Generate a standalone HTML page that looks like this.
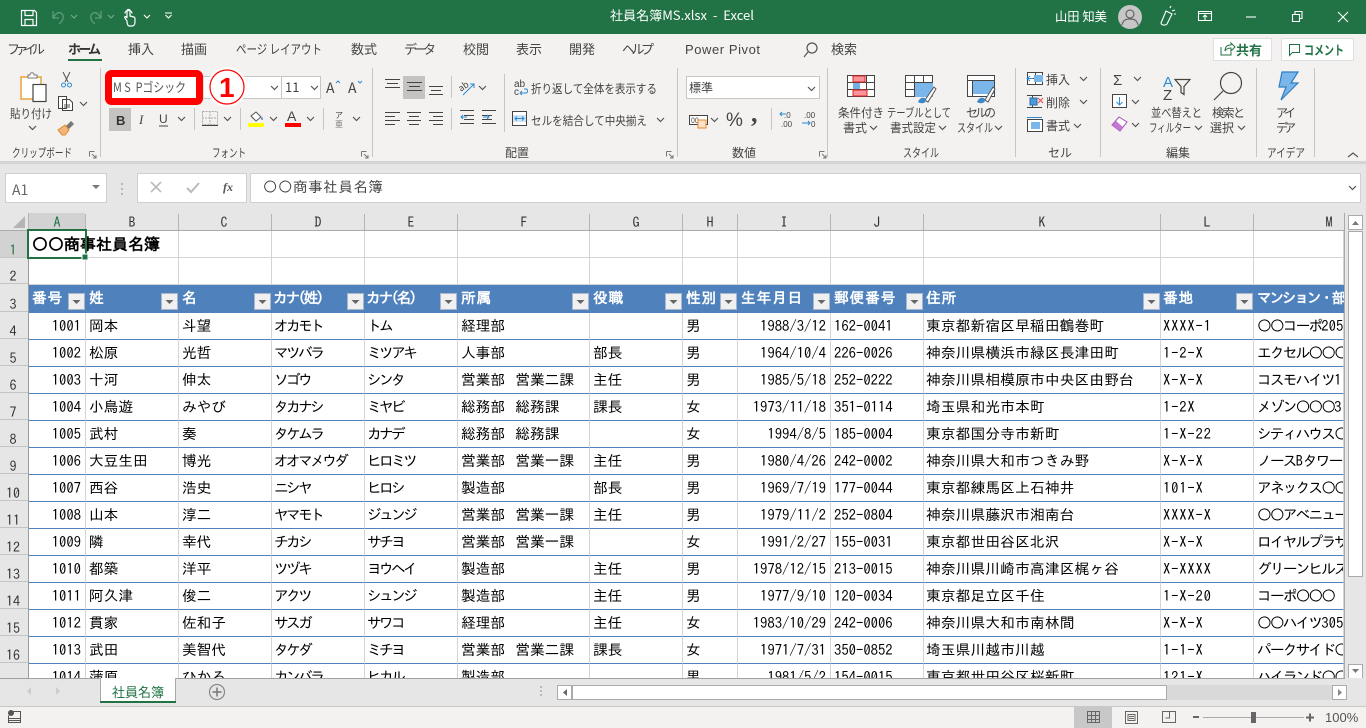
<!DOCTYPE html>
<html lang="ja"><head><meta charset="utf-8"><title>社員名簿MS.xlsx - Excel</title>
<style>
html,body{margin:0;padding:0;width:1366px;height:728px;overflow:hidden;background:#e6e6e6}
#grid{position:absolute;left:29px;top:231px;width:1315px;height:447px;overflow:hidden;background:#fff}
table{border-collapse:separate;border-spacing:0;table-layout:fixed;width:1315px;font:14.67px/1 "IPAGothic","Noto Sans CJK JP",monospace;color:#000}
td{padding:0 0 0 3px;border-right:1px solid #d4d4d4;border-bottom:1px solid #4f81bd;white-space:nowrap;overflow:hidden;box-sizing:border-box;height:27px;vertical-align:middle}
tr.p td{border-bottom-color:#d4d4d4}
tr.h td{background:#4f81bd;color:#fff;font-weight:bold;border:0;height:28px;padding-bottom:1px;overflow:hidden;letter-spacing:.9px}
td.n{text-align:right;padding:0 4px 0 0}
td.k{letter-spacing:-2.6px;padding-left:2px}
td.m{letter-spacing:-1.8px}
td .d{letter-spacing:0}
td:nth-child(6){word-spacing:3px}
td:nth-child(11){padding-left:2px;letter-spacing:.2px}
td:nth-child(12){padding-left:2px;letter-spacing:.8px}
tr.h td.k{letter-spacing:-2px;padding-left:1px}
tr.h td.m{letter-spacing:-2.2px}
#ov{position:absolute;left:0;top:0}
#ov text{font-family:"Noto Sans CJK JP","Liberation Sans",sans-serif;font-size:12px;fill:#444}
#ov .g{font-family:"IPAGothic",monospace;font-size:14px;fill:#333}
#ov .w{fill:#fff}
#ov .tb{font-size:13px}
</style></head><body>
<div id="grid"><table>
<colgroup><col style="width:57px"><col style="width:93px"><col style="width:93px"><col style="width:93px"><col style="width:93px"><col style="width:132px"><col style="width:93px"><col style="width:55px"><col style="width:93px"><col style="width:93px"><col style="width:237px"><col style="width:93px"><col style="width:90px"></colgroup>
<tr class="p"><td style="overflow:visible;font-weight:bold;font-size:16px;padding-top:1px;padding-bottom:1px">〇〇商事社員名簿</td><td></td><td></td><td></td><td></td><td></td><td></td><td></td><td></td><td></td><td></td><td></td><td></td></tr>
<tr class="p"><td style="height:26px"></td><td></td><td></td><td></td><td></td><td></td><td></td><td></td><td></td><td></td><td></td><td></td><td></td></tr>
<tr class="h"><td>番号</td><td>姓</td><td>名</td><td class="k">カナ(姓)</td><td class="k">カナ(名)</td><td>所属</td><td>役職</td><td>性別</td><td>生年月日</td><td>郵便番号</td><td>住所</td><td>番地</td><td class="m">マンション・部屋</td></tr>
<tr><td class="n">1001</td><td>岡本</td><td>斗望</td><td class="k">オカモト</td><td class="k">トム</td><td>経理部</td><td></td><td>男</td><td class="n">1988/3/12</td><td>162-0041</td><td>東京都新宿区早稲田鶴巻町</td><td>XXXX-1</td><td class="m">〇〇コーポ<span class="d">205</span></td></tr>
<tr><td class="n">1002</td><td>松原</td><td>光哲</td><td class="k">マツバラ</td><td class="k">ミツアキ</td><td>人事部</td><td>部長</td><td>男</td><td class="n">1964/10/4</td><td>226-0026</td><td>神奈川県横浜市緑区長津田町</td><td>1-2-X</td><td class="m">エクセル〇〇〇</td></tr>
<tr><td class="n">1003</td><td>十河</td><td>伸太</td><td class="k">ソゴウ</td><td class="k">シンタ</td><td>営業部 営業二課</td><td>主任</td><td>男</td><td class="n">1985/5/18</td><td>252-0222</td><td>神奈川県相模原市中央区由野台</td><td>X-X-X</td><td class="m">コスモハイツ<span class="d">1</span></td></tr>
<tr><td class="n">1004</td><td>小鳥遊</td><td>みやび</td><td class="k">タカナシ</td><td class="k">ミヤビ</td><td>総務部 総務課</td><td>課長</td><td>女</td><td class="n">1973/11/18</td><td>351-0114</td><td>埼玉県和光市本町</td><td>1-2X</td><td class="m">メゾン〇〇〇<span class="d">3</span></td></tr>
<tr><td class="n">1005</td><td>武村</td><td>奏</td><td class="k">タケムラ</td><td class="k">カナデ</td><td>総務部 総務課</td><td></td><td>女</td><td class="n">1994/8/5</td><td>185-0004</td><td>東京都国分寺市新町</td><td>1-X-22</td><td class="m">シティハウス〇</td></tr>
<tr><td class="n">1006</td><td>大豆生田</td><td>博光</td><td class="k">オオマメウダ</td><td class="k">ヒロミツ</td><td>営業部 営業一課</td><td>主任</td><td>男</td><td class="n">1980/4/26</td><td>242-0002</td><td>神奈川県大和市つきみ野</td><td>X-X-X</td><td class="m">ノース<span class="d">B</span>タワー</td></tr>
<tr><td class="n">1007</td><td>西谷</td><td>浩史</td><td class="k">ニシヤ</td><td class="k">ヒロシ</td><td>製造部</td><td>部長</td><td>男</td><td class="n">1969/7/19</td><td>177-0044</td><td>東京都練馬区上石神井</td><td>101-X</td><td class="m">アネックス〇〇</td></tr>
<tr><td class="n">1008</td><td>山本</td><td>淳二</td><td class="k">ヤマモト</td><td class="k">ジュンジ</td><td>営業部 営業一課</td><td>主任</td><td>男</td><td class="n">1979/11/2</td><td>252-0804</td><td>神奈川県藤沢市湘南台</td><td>XXXX-X</td><td class="m">〇〇アベニュー</td></tr>
<tr><td class="n">1009</td><td>隣</td><td>幸代</td><td class="k">チカシ</td><td class="k">サチヨ</td><td>営業部 営業一課</td><td></td><td>女</td><td class="n">1991/2/27</td><td>155-0031</td><td>東京都世田谷区北沢</td><td>X-X-X</td><td class="m">ロイヤルプラザ</td></tr>
<tr><td class="n">1010</td><td>都築</td><td>洋平</td><td class="k">ツヅキ</td><td class="k">ヨウヘイ</td><td>製造部</td><td>主任</td><td>男</td><td class="n">1978/12/15</td><td>213-0015</td><td>神奈川県川崎市高津区梶ヶ谷</td><td>X-XXXX</td><td class="m">グリーンヒルズ</td></tr>
<tr><td class="n">1011</td><td>阿久津</td><td>俊二</td><td class="k">アクツ</td><td class="k">シュンジ</td><td>製造部</td><td>主任</td><td>男</td><td class="n">1977/9/10</td><td>120-0034</td><td>東京都足立区千住</td><td>1-X-20</td><td class="m">コーポ〇〇〇</td></tr>
<tr><td class="n">1012</td><td>貫家</td><td>佐和子</td><td class="k">サスガ</td><td class="k">サワコ</td><td>経理部</td><td>主任</td><td>女</td><td class="n">1983/10/29</td><td>242-0006</td><td>神奈川県大和市南林間</td><td>X-X-X</td><td class="m">〇〇ハイツ<span class="d">305</span></td></tr>
<tr><td class="n">1013</td><td>武田</td><td>美智代</td><td class="k">タケダ</td><td class="k">ミチヨ</td><td>営業部 営業二課</td><td>課長</td><td>女</td><td class="n">1971/7/31</td><td>350-0852</td><td>埼玉県川越市川越</td><td>1-1-X</td><td class="m">パークサイド〇</td></tr>
<tr><td class="n">1014</td><td>蒲原</td><td>ひかる</td><td class="k">カンバラ</td><td class="k">ヒカル</td><td>製造部</td><td></td><td>男</td><td class="n">1981/5/2</td><td>154-0015</td><td>東京都世田谷区桜新町</td><td>121-X</td><td class="m">ハイランド〇〇</td></tr>
</table></div>
<svg id="ov" width="1366" height="728" viewBox="0 0 1366 728" xmlns="http://www.w3.org/2000/svg">
<defs>
<path id="c" d="M0 0l3.5 3.5L7 0" fill="none" stroke="#555" stroke-width="1.2"/>
<path id="cw" d="M0 0l3 3 3-3" fill="none" stroke="#fff" stroke-width="1.1"/>
<g id="fb"><rect x=".5" y=".5" width="16" height="16" fill="#f0f0f0" stroke="#a9b6cc"/><path d="M4.5 7h8l-4 4z" fill="#666"/></g>
<g id="lau"><path d="M.5.5h5M.5.5v5" fill="none" stroke="#777"/><path d="M3 3l4 4M7 4v3H4" fill="none" stroke="#777"/></g>
</defs>
<!-- title bar -->
<rect width="1366" height="34" fill="#217346"/>
<rect y="34" width="1366" height="127" fill="#f3f2f1"/>
<rect y="161" width="1366" height="3" fill="#d4d4d4"/>
<g fill="none" stroke="#fff" stroke-width="1.2">
<path d="M21.5 10.5h13l2 2v13h-15zM25 10.5v5h8v-5M25 25.5v-6h8v6"/>
<path d="M125 13.5c0-4 7-4 7 0M127 21l-2-3c-1-2 1-2 2 0v-7c0-2 3-2 3 0v5l4 1c1 .5 1 1 1 2v3c0 2-1 4-3 4h-3c-1 0-2-2-2-5z"/>
</g>
<g fill="none" stroke="#5d9b7d" stroke-width="1.3">
<path d="M53 11v7h6M53 18c3-5 6-7 9-4 2 2 2 6-3 10"/>
<path d="M101 11v7h-6M101 18c-3-5-6-7-9-4-2 2-2 6 3 10"/>
</g>
<use href="#cw" x="71" y="15" opacity=".4"/><use href="#cw" x="108" y="15" opacity=".4"/><use href="#cw" x="144" y="15"/>
<path d="M165 13h7" stroke="#fff"/><use href="#cw" x="165.500" y="15"/>
<text x="610" y="20" class="w" style="font-size:12.500px" textLength="144" lengthAdjust="spacingAndGlyphs">社員名簿MS.xlsx &#160;- &#160;Excel</text>
<text x="1055" y="21" class="w" textLength="52" lengthAdjust="spacingAndGlyphs" style="font-size:12.500px">山田 知美</text>
<circle cx="1130" cy="17" r="12" fill="#c6c6c6"/>
<g fill="none" stroke="#666" stroke-width="1.200"><circle cx="1130" cy="14" r="4"/><path d="M1122 25c1-5 4-6 8-6s7 1 8 6"/></g>
<g fill="none" stroke="#fff" stroke-width="1.100">
<path d="M1161 23l5-12 6 3-5 10c-2 2-6 1-6-1zM1172 11l3-1M1170 8l1-2M1174 14h2"/>
<path d="M1198.500 11.500h13v9h-13zM1198.500 13.500h13M1205 20v-5M1203 17l2-2 2 2"/>
<path d="M1246 17h10"/>
<path d="M1292.500 14.500h7v7h-7zM1295 14v-2.500h7v7h-2"/>
<path d="M1338 12l10 10M1348 12l-10 10"/>
</g>
<!-- tabs -->
<g class="tabs">
<text x="7" y="54" class="tb" textLength="38">ファイル</text>
<text x="68" y="54" class="tb" textLength="33" style="font-weight:bold;fill:#333">ホーム</text>
<text x="128" y="54" class="tb">挿入</text><text x="181" y="54" class="tb">描画</text>
<text x="236" y="54" class="tb" textLength="86" lengthAdjust="spacingAndGlyphs">ページ レイアウト</text>
<text x="351" y="54" class="tb">数式</text><text x="404" y="54" class="tb" textLength="32">データ</text>
<text x="463" y="54" class="tb">校閲</text><text x="516" y="54" class="tb">表示</text><text x="569" y="54" class="tb">開発</text>
<text x="622" y="54" class="tb" textLength="32">ヘルプ</text>
<text x="685" y="54" class="tb" textLength="75" style="font-family:'Liberation Sans',sans-serif">Power Pivot</text>
<text x="831" y="54" class="tb">検索</text>
</g>
<rect x="68" y="59" width="34" height="2" fill="#217346"/>
<g fill="none" stroke="#555" stroke-width="1.200"><circle cx="812" cy="48" r="5"/><path d="M808 52l-4 5"/></g>
<rect x="1213.500" y="38.500" width="58" height="22" fill="#fff" stroke="#e1dfdd"/>
<rect x="1281.500" y="38.500" width="72" height="22" fill="#fff" stroke="#e1dfdd"/>
<path d="M1221 47v8h10v-3M1225 51c0-4 2-6 6-6v-2l4 4-4 4v-3c-3 0-5 1-6 3z" fill="none" stroke="#217346"/>
<path d="M1289.500 44.500h10v8h-7l-3 3z" fill="none" stroke="#217346"/>
<text x="1236" y="55" style="font-size:13px;font-weight:bold;fill:#217346">共有</text>
<text x="1304" y="55" textLength="40" lengthAdjust="spacingAndGlyphs" style="font-size:13px;font-weight:bold;fill:#217346">コメント</text>
<!-- separators -->
<g stroke="#c8c6c4"><path d="M100.500 68v89M372.500 68v89M677.500 68v89M827.500 68v89M1015.500 68v89M1100.500 68v89M1256.500 68v89M1314.500 68v89M194.500 108v22M240.500 108v22M323.500 108v22M451.500 76v22M451.500 108v22M504.500 74v58M771.500 108v22"/></g>
<!-- clipboard -->
<path d="M21 77h20v22H21z" fill="#fff" stroke="#e8a33e" stroke-width="1.500"/>
<path d="M28 78v-3h2c0-3 4-3 4 0h3v3z" fill="#fff" stroke="#777"/>
<rect x="33" y="84.500" width="13" height="17" fill="#fff" stroke="#444" stroke-width="1.200"/>
<text x="10" y="118" textLength="42" lengthAdjust="spacingAndGlyphs">貼り付け</text><use href="#c" x="29" y="126"/>
<path d="M63 72l5 10M70 72l-5 10" stroke="#555" fill="none"/><g fill="none" stroke="#2e8bd0"><circle cx="63.500" cy="85" r="2"/><circle cx="69.500" cy="85" r="2"/></g>
<path d="M58.500 96.500h8v12h-8zM62.500 99.500h7l3 3v8h-10z" fill="#fff" stroke="#444"/><path d="M64 105h6M64 107h6" stroke="#555"/>
<use href="#c" x="80" y="102"/>
<path d="M71 121l3 3-5 5-3-3z" fill="#777"/><path d="M58 130l7-5 4 5-4 5h-3z" fill="#f0b47c" stroke="#e08a2c"/>
<text x="12" y="157" textLength="60" lengthAdjust="spacingAndGlyphs">クリップボード</text><use href="#lau" x="89" y="151"/>
<!-- font -->
<rect x="203" y="76.500" width="80" height="22" fill="#fff" stroke="#c8c6c4"/>
<rect x="108.500" y="73.500" width="91" height="28" rx="3" fill="#fff" stroke="#f00" stroke-width="7"/>
<text x="113" y="92" textLength="73" lengthAdjust="spacingAndGlyphs" style="font-size:13px;fill:#555">M S &#160;Pゴシック</text>
<use href="#c" x="271" y="86"/>
<rect x="281.500" y="76.500" width="39" height="22" fill="#fff" stroke="#c8c6c4"/>
<text x="285" y="92" style="font-size:13px">11</text><use href="#c" x="311" y="86"/>
<circle cx="227" cy="87" r="20" fill="#fff" opacity=".85"/>
<circle cx="227" cy="87" r="17" fill="#fff" stroke="#f00" stroke-width="1.200"/>
<text x="219" y="97" style="font:bold 28px 'Liberation Sans',sans-serif;fill:#f00">1</text>
<text x="326" y="93" style="font-size:14px">A</text><path d="M336 83l2-2 2 2" stroke="#2e8bd0" fill="none"/>
<text x="348" y="93" style="font-size:14px">A</text><path d="M358 81l2 2 2-2" stroke="#2e8bd0" fill="none"/>
<rect x="109" y="108" width="22" height="23" fill="#c4c3c2"/>
<text x="116" y="125" style="font:bold 13px 'Liberation Sans',sans-serif;fill:#333">B</text>
<text x="139" y="124" style="font:italic 13px 'Liberation Serif',serif;fill:#444">I</text>
<text x="159" y="123" style="font:12px 'Liberation Sans',sans-serif;fill:#444">U</text><path d="M159 126h9" stroke="#444"/>
<use href="#c" x="178" y="117"/>
<path d="M202.500 111.500h15v13h-15zM210 111v13M202 118h15" fill="none" stroke="#aaa" stroke-dasharray="2 1"/><path d="M202 125.500h16" stroke="#444"/>
<use href="#c" x="224" y="117"/>
<path d="M251 116l5-4 5 5-5 4z" fill="#fff" stroke="#555"/><path d="M262 117c1 1 1 3 0 3s-1-2 0-3z" fill="#2e6fc0"/><rect x="248" y="123" width="16" height="4" fill="#ff0"/>
<use href="#c" x="270" y="117"/>
<text x="287" y="121" style="font:14px 'Liberation Sans',sans-serif;fill:#444">A</text><rect x="285" y="123" width="16" height="4" fill="#f00"/>
<use href="#c" x="307" y="117"/>
<text x="335" y="118" style="font-size:8px">ア</text><text x="335" y="127" style="font-size:8px;fill:#777">亜</text>
<use href="#c" x="353" y="117"/>
<text x="212" y="157" textLength="34" lengthAdjust="spacingAndGlyphs">フォント</text><use href="#lau" x="361" y="151"/>
<!-- alignment -->
<rect x="403" y="76" width="22" height="23" fill="#c4c3c2"/>
<g stroke="#444"><path d="M385 79.500h15M387 83.500h11M385 87.500h15"/><path d="M407 82.500h15M409 86.500h11M407 90.500h15"/><path d="M429 86.500h14M431 90.500h10M429 94.500h14"/>
<path d="M385 112.500h15M385 116.500h10M385 120.500h15M385 124.500h10"/><path d="M407 112.500h14M409 116.500h10M407 120.500h14M409 124.500h10"/><path d="M429 112.500h14M433 116.500h10M429 120.500h14M433 124.500h10"/>
<path d="M464 115.500h10M464 119.500h10M460 123.500h14M460 110.500h14"/><path d="M482 110.500h14M482 123.500h14M482 115.500h10M482 119.500h10"/></g>
<path d="M467 117h-6M463 115l-2 2 2 2" stroke="#2e8bd0" fill="none"/><path d="M483 117h6M487 115l2 2-2 2" stroke="#2e8bd0" fill="none"/>
<text x="459" y="90" style="font-size:9px" transform="rotate(-35 463 88)">ab</text><path d="M463 95l11-11M470 84h4v4" stroke="#2e8bd0" fill="none"/><use href="#c" x="479" y="86"/>
<text x="514" y="87" style="font:10px 'Liberation Sans',sans-serif">ab</text><text x="514" y="95" style="font:10px 'Liberation Sans',sans-serif">c</text><path d="M520 93h6c2 0 2-4 0-4h-2M522 91l-2 2 2 2" stroke="#2e8bd0" fill="none"/>
<text x="531" y="93" textLength="126" lengthAdjust="spacingAndGlyphs">折り返して全体を表示する</text>
<rect x="512.500" y="111.500" width="14" height="14" fill="#fff" stroke="#444"/><rect x="513" y="115" width="13" height="7" fill="#cfe4f5"/><path d="M515 118.500h9M517 116.500l-2 2 2 2M522 116.500l2 2-2 2" stroke="#2e8bd0" fill="none"/>
<text x="531" y="125" textLength="116" lengthAdjust="spacingAndGlyphs">セルを結合して中央揃え</text><use href="#c" x="657" y="118"/>
<text x="505" y="157">配置</text><use href="#lau" x="666" y="151"/>
<!-- number -->
<rect x="686.500" y="76.500" width="133" height="22" fill="#fff" stroke="#c8c6c4"/>
<text x="689" y="92">標準</text><use href="#c" x="808" y="87"/>
<rect x="689.500" y="115.500" width="18" height="9" fill="#fff" stroke="#444"/><text x="691" y="123" style="font-size:7px">00</text>
<path d="M698 120h8v8h-8z" fill="#fbe2c8" stroke="#e8872c"/><use href="#c" x="711" y="118"/>
<text x="726" y="126" style="font:19px 'Liberation Sans',sans-serif">%</text>
<text x="751" y="122" style="font:bold 26px 'Liberation Serif',serif;fill:#444">,</text>
<text x="784" y="118" style="font:8px 'Liberation Sans',sans-serif">.0</text><text x="781" y="127" style="font:8px 'Liberation Sans',sans-serif">.00</text>
<path d="M780 114h6M782 112l-2 2 2 2" stroke="#2e8bd0" fill="none"/>
<text x="804" y="118" style="font:8px 'Liberation Sans',sans-serif">.00</text><text x="811" y="127" style="font:8px 'Liberation Sans',sans-serif">0</text>
<path d="M802 123h8M808 121l2 2-2 2" stroke="#2e8bd0" fill="none"/>
<text x="732" y="157">数値</text><use href="#lau" x="819" y="151"/>
<!-- styles -->
<g fill="none" stroke="#444"><rect x="847.500" y="75.500" width="27" height="21" fill="#fff"/><path d="M847 82.500h28M847 89.500h28M855.500 75v22M866.500 75v22"/></g>
<rect x="853" y="76" width="12" height="6" fill="#f8949a" stroke="#d22"/><rect x="853" y="83" width="7" height="6" fill="#6fb0e6"/><rect x="853" y="90" width="14" height="6" fill="#f8949a" stroke="#d22"/>
<g fill="none" stroke="#444"><rect x="905.500" y="75.500" width="27" height="21" fill="#fff"/><path d="M905 82.500h28M905 89.500h28M914.500 75v22M923.500 75v22"/></g><rect x="915" y="83" width="18" height="14" fill="#7ab6ea"/>
<g fill="none" stroke="#444"><rect x="967.500" y="75.500" width="27" height="21" fill="#fff"/><path d="M967 80.500h28M972.500 80v16"/></g><rect x="973" y="81" width="21" height="13" fill="#7ab6ea"/>
<path d="M925 100l9-13 2 2-8 13z" fill="#fff" stroke="#555"/><path d="M918 102c2-5 6-5 8-3 1 3-3 6-8 3z" fill="#3f88c8"/>
<path d="M985 100l8-13 2 2-7 13z" fill="#fff" stroke="#555"/><path d="M977 102c2-5 6-5 8-3 1 3-3 6-8 3z" fill="#3f88c8"/>
<text x="838" y="117" textLength="46" lengthAdjust="spacingAndGlyphs">条件付き</text><text x="843" y="132" textLength="24">書式</text><use href="#c" x="870" y="126"/>
<text x="887" y="117" textLength="64" lengthAdjust="spacingAndGlyphs">テーブルとして</text><text x="890" y="132" textLength="46" lengthAdjust="spacingAndGlyphs">書式設定</text><use href="#c" x="939" y="126"/>
<text x="966" y="117" textLength="30">セルの</text><text x="957" y="132" textLength="36" lengthAdjust="spacingAndGlyphs">スタイル</text><use href="#c" x="995" y="126"/>
<text x="903" y="157" textLength="36" lengthAdjust="spacingAndGlyphs">スタイル</text>
<!-- cells -->
<g fill="none" stroke="#444"><rect x="1027.500" y="72.500" width="15" height="12" fill="#fff"/><path d="M1027 78.500h16M1035.500 72v13"/></g><rect x="1034" y="75" width="9" height="7" fill="#7ab6ea"/><path d="M1027 78.500h6M1030 76l-3 2.500 3 2.500" stroke="#2e8bd0" fill="none"/>
<text x="1046" y="84">挿入</text><use href="#c" x="1080" y="77"/>
<g fill="none" stroke="#444"><path d="M1027 95.500h15M1027 107.500h15M1032.500 95v4M1032.500 104v4"/></g><rect x="1030" y="98" width="7" height="7" fill="#4b9ade" stroke="#2e6fa8"/><path d="M1038 98l5 5M1043 98l-5 5" stroke="#e44"/>
<text x="1046" y="107">削除</text><use href="#c" x="1080" y="100"/>
<g fill="none" stroke="#444"><rect x="1027.500" y="119.500" width="15" height="12" fill="#fff"/><path d="M1027 117.500h15" stroke="#2e8bd0"/></g><rect x="1031" y="122" width="9" height="7" fill="#7ab6ea"/>
<text x="1046" y="130">書式</text><use href="#c" x="1074" y="124"/>
<text x="1048" y="157">セル</text>
<!-- editing -->
<text x="1113" y="85" style="font:15px 'Liberation Sans',sans-serif;fill:#444">Σ</text><use href="#c" x="1134" y="77"/>
<rect x="1112.500" y="94.500" width="14" height="13" fill="#fff" stroke="#444"/><path d="M1119.500 97v8M1116.500 102l3 3 3-3" stroke="#2e8bd0" fill="none"/><use href="#c" x="1132" y="100"/>
<path d="M1112 125l7-8 8 5-7 9z" fill="#fff" stroke="#a84cb8"/><path d="M1112 125l4-4 7 6-3 4z" fill="#c278d0"/><use href="#c" x="1132" y="123"/>
<text x="1163" y="87" style="font:15px 'Liberation Sans',sans-serif;fill:#2e8bd0">A</text><text x="1163" y="100" style="font:15px 'Liberation Sans',sans-serif;fill:#444">Z</text>
<path d="M1175 79.500h15l-6 7v8l-3-2v-6z" fill="none" stroke="#444" stroke-width="1.200"/>
<text x="1151" y="117" textLength="51" lengthAdjust="spacingAndGlyphs">並べ替えと</text><text x="1149" y="132" textLength="42" lengthAdjust="spacingAndGlyphs">フィルター</text><use href="#c" x="1195" y="126"/>
<g fill="none" stroke="#444" stroke-width="1.200"><circle cx="1231" cy="83" r="10.500"/><path d="M1223 91l-9 9"/></g>
<text x="1212" y="117" textLength="33">検索と</text><text x="1210" y="132" textLength="24">選択</text><use href="#c" x="1238" y="126"/>
<text x="1166" y="157">編集</text>
<!-- ideas -->
<path d="M1282 72h16l-7 11h7l-17 17 5-13h-7z" fill="#7ab6ea" stroke="#2e7fc2" stroke-width="1.200"/>
<text x="1276" y="117" textLength="20">アイ</text><text x="1276" y="132" textLength="20">デア</text>
<text x="1267" y="157" textLength="38" lengthAdjust="spacingAndGlyphs">アイデア</text>
<path d="M1348 157l5-4 5 4" fill="none" stroke="#555" stroke-width="1.200"/>
<!-- formula bar -->
<rect x="5.500" y="173.500" width="101" height="29" fill="#fff" stroke="#d0d0d0"/>
<text x="12" y="195" style="font-size:14px;fill:#666">A1</text><path d="M92 185h8l-4 4z" fill="#777"/>
<path d="M122 183v2M122 188v2M122 193v2" stroke="#aaa" stroke-width="1.500"/>
<rect x="137.500" y="173.500" width="109" height="29" fill="#fff" stroke="#d0d0d0"/>
<path d="M151 182l10 10M161 182l-10 10" stroke="#bbb" stroke-width="1.600"/>
<path d="M187 188l4 4 8-9" fill="none" stroke="#bbb" stroke-width="2"/>
<text x="223" y="191" style="font:italic bold 12px 'Liberation Serif',serif;fill:#555">fx</text>
<rect x="250.500" y="173.500" width="1110" height="29" fill="#fff" stroke="#d0d0d0"/>
<use href="#c" x="1349" y="186"/>
<text x="263" y="192" class="g" textLength="120" style="font-size:14.500px;fill:#444">〇〇商事社員名簿</text>
<!-- col headers -->
<rect x="0" y="213" width="1345" height="18" fill="#e6e6e6"/>
<rect x="29" y="213" width="56" height="18" fill="#d2d2d2"/>
<path d="M25 216v12H13z" fill="#b5b5b5"/>
<g stroke="#b5b5b5"><path d="M28.500 213v465M85.500 214v16M178.500 214v16M271.500 214v16M364.500 214v16M457.500 214v16M589.500 214v16M682.500 214v16M737.500 214v16M830.500 214v16M923.500 214v16M1160.500 214v16M1253.500 214v16"/></g>
<path d="M0 230.500h1345" stroke="#aaa"/>
<path d="M1344.500 213v465" stroke="#aaa"/>
<g class="colh">
<text x="57" y="227" class="g" text-anchor="middle" style="fill:#217346">A</text>
<text x="132" y="227" class="g" text-anchor="middle">B</text><text x="224" y="227" class="g" text-anchor="middle">C</text><text x="318" y="227" class="g" text-anchor="middle">D</text><text x="411" y="227" class="g" text-anchor="middle">E</text><text x="524" y="227" class="g" text-anchor="middle">F</text><text x="636" y="227" class="g" text-anchor="middle">G</text><text x="710" y="227" class="g" text-anchor="middle">H</text><text x="784" y="227" class="g" text-anchor="middle">I</text><text x="877" y="227" class="g" text-anchor="middle">J</text><text x="1042" y="227" class="g" text-anchor="middle">K</text><text x="1207" y="227" class="g" text-anchor="middle">L</text><text x="1329" y="227" class="g" text-anchor="middle">M</text>
</g>
<!-- row headers -->
<rect x="0" y="231" width="28" height="447" fill="#e6e6e6"/>
<rect x="0" y="231" width="28" height="27" fill="#d2d2d2"/>
<g stroke="#c4c4c4"><path d="M0 257.500h28M0 283.500h28M0 311.500h28M0 338.500h28M0 365.500h28M0 392.500h28M0 419.500h28M0 446.500h28M0 473.500h28M0 500.500h28M0 527.500h28M0 554.500h28M0 581.500h28M0 608.500h28M0 635.500h28M0 662.500h28"/></g>
<path d="M28.500 231v447" stroke="#9a9a9a"/>
<g>
<text x="13" y="255" class="g" text-anchor="middle" style="fill:#217346">1</text><text x="13" y="281" class="g" text-anchor="middle">2</text><text x="13" y="309" class="g" text-anchor="middle">3</text><text x="13" y="336" class="g" text-anchor="middle">4</text><text x="13" y="363" class="g" text-anchor="middle">5</text><text x="13" y="390" class="g" text-anchor="middle">6</text><text x="13" y="417" class="g" text-anchor="middle">7</text><text x="13" y="444" class="g" text-anchor="middle">8</text><text x="13" y="471" class="g" text-anchor="middle">9</text><text x="13" y="498" class="g" text-anchor="middle">10</text><text x="13" y="525" class="g" text-anchor="middle">11</text><text x="13" y="552" class="g" text-anchor="middle">12</text><text x="13" y="579" class="g" text-anchor="middle">13</text><text x="13" y="606" class="g" text-anchor="middle">14</text><text x="13" y="633" class="g" text-anchor="middle">15</text><text x="13" y="660" class="g" text-anchor="middle">16</text>
</g>
<!-- filter buttons -->
<use href="#fb" x="68" y="293"/><use href="#fb" x="161" y="293"/><use href="#fb" x="254" y="293"/><use href="#fb" x="347" y="293"/><use href="#fb" x="440" y="293"/><use href="#fb" x="572" y="293"/><use href="#fb" x="665" y="293"/><use href="#fb" x="720" y="293"/><use href="#fb" x="813" y="293"/><use href="#fb" x="906" y="293"/><use href="#fb" x="1143" y="293"/><use href="#fb" x="1236" y="293"/>
<!-- selection -->
<rect x="28" y="230" width="58" height="28" fill="none" stroke="#217346" stroke-width="2"/>
<rect x="82" y="254" width="6" height="6" fill="#217346" stroke="#fff"/>
<!-- v scrollbar -->
<rect x="1345" y="213" width="21" height="466" fill="#e6e6e6"/>
<rect x="1348.500" y="215.500" width="14" height="14" fill="#fff" stroke="#aaa"/><path d="M1352 225l3.500-4 3.500 4z" fill="#777"/>
<rect x="1348.500" y="231.500" width="14" height="345" fill="#fff" stroke="#aaa"/>
<rect x="1348.500" y="664.500" width="14" height="14" fill="#fff" stroke="#aaa"/><path d="M1352 669l3.500 4 3.500-4z" fill="#777"/>
<!-- sheet tabs -->
<rect y="678" width="1366" height="28" fill="#e6e6e6"/>
<path d="M0 678.500h1345" stroke="#a0a0a0"/>
<path d="M100.500 678v24h75v-24" fill="#fff" stroke="#aaa"/>
<rect x="100" y="701" width="76" height="2" fill="#217346"/>
<text x="112" y="697" textLength="52" style="font-size:13px;fill:#217346">社員名簿</text>
<path d="M31 687l-4 4 4 4z" fill="#ccc"/><path d="M56 687l4 4-4 4z" fill="#ccc"/>
<circle cx="217" cy="692" r="7.500" fill="none" stroke="#888" stroke-width="1.200"/><path d="M212.500 692h9M217 687.500v9" stroke="#777" stroke-width="1.500"/>
<path d="M541 686v2M541 690v2M541 694v2" stroke="#aaa" stroke-width="1.500"/>
<rect x="557.500" y="685.500" width="14" height="14" fill="#fff" stroke="#aaa"/><path d="M567 689l-4 3.500 4 3.500z" fill="#666"/>
<rect x="572" y="685" width="760" height="15" fill="#d9d9d9"/>
<rect x="572.500" y="685.500" width="594" height="14" fill="#fff" stroke="#aaa"/>
<rect x="1332.500" y="685.500" width="14" height="14" fill="#fff" stroke="#aaa"/><path d="M1338 689l4 3.500-4 3.500z" fill="#888"/>
<!-- status bar -->
<rect y="706" width="1366" height="22" fill="#f3f2f1"/><path d="M0 706.500h1366" stroke="#c8c8c8"/>
<circle cx="11" cy="713" r="3" fill="#555"/><path d="M13.500 711.500h7v11h-12v-7M9 718.500h11M9 720.500h11" fill="none" stroke="#555"/>
<rect x="1074" y="707" width="38" height="21" fill="#c8c8c8"/>
<path d="M1087.500 711.500h12v11h-12zM1091.500 711v12M1095.500 711v12M1087 715.500h13M1087 719.500h13" fill="none" stroke="#666"/>
<path d="M1125.500 711.500h12v12h-12zM1128 714.500h7v6h-7zM1129 716.500h5M1129 718.500h5" fill="none" stroke="#666"/>
<path d="M1162.500 711.500h13v11h-13zM1169.500 711v7h-4" fill="none" stroke="#666"/>
<rect x="1193" y="716" width="6" height="2" fill="#666"/><path d="M1203 717.500h101" stroke="#aaa"/><rect x="1251" y="712" width="5" height="11" fill="#666"/>
<path d="M1306 717.500h8M1310 713.500v8" stroke="#666" stroke-width="2"/>
<text x="1325" y="722" style="font:13px 'Liberation Sans',sans-serif;fill:#555">100%</text>
</svg>
</body></html>
